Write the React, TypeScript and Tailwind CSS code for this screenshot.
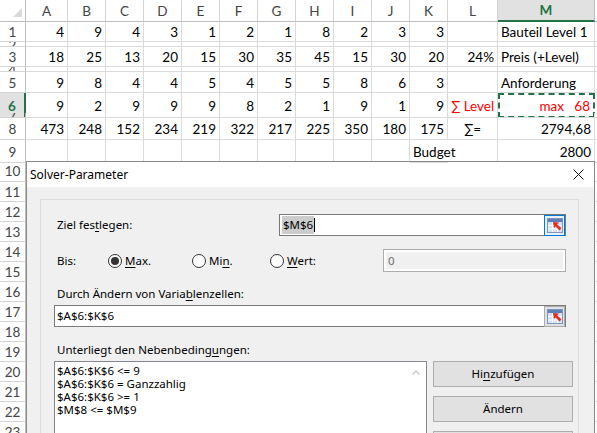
import type { ReactNode } from 'react';

const COLS = 'grid grid-cols-[26px_42px_repeat(10,38px)_50px_97px_2px]';
const LETTERS = ['A', 'B', 'C', 'D', 'E', 'F', 'G', 'H', 'I', 'J', 'K', 'L', 'M'];

type SheetRow = {
  n: number;
  h: string;
  vals?: string[];
  L?: ReactNode;
  M?: ReactNode;
  budget?: boolean;
  active?: boolean;
};

const ROWS: SheetRow[] = [
  { n: 1, h: 'h-[20px]', vals: ['4', '9', '4', '3', '1', '2', '1', '8', '2', '3', '3'], M: <span className="pl-[3px]">Bauteil Level 1</span> },
  { n: 2, h: 'h-[5px]' },
  {
    n: 3,
    h: 'h-[20px]',
    vals: ['18', '25', '13', '20', '15', '30', '35', '45', '15', '30', '20'],
    L: <span className="ml-auto pr-[3px]">24%</span>,
    M: <span className="pl-[3px]">Preis (+Level)</span>,
  },
  { n: 4, h: 'h-[5px]' },
  { n: 5, h: 'h-[21px]', vals: ['9', '8', '4', '4', '5', '4', '5', '5', '8', '6', '3'], M: <span className="pl-[3px]">Anforderung</span> },
  {
    n: 6,
    h: 'h-[20px]',
    vals: ['9', '2', '9', '9', '9', '8', '2', '1', '9', '1', '9'],
    L: <span className="pl-[3px] text-[#ff0000] whitespace-nowrap">∑ Level</span>,
    active: true,
  },
  { n: 7, h: 'h-[5px]' },
  {
    n: 8,
    h: 'h-[22px]',
    vals: ['473', '248', '152', '234', '219', '322', '217', '225', '350', '180', '175'],
    L: <span className="mx-auto">∑=</span>,
    M: <span className="ml-auto pr-[3px]">2794,68</span>,
  },
  { n: 9, h: 'h-[20px]', budget: true, M: <span className="ml-auto pr-[3px]">2800</span> },
];

function Underline({ children }: { children: ReactNode }) {
  return <span className="underline underline-offset-2">{children}</span>;
}

function ColumnHeader() {
  return (
    <div className={`${COLS} h-[22px] text-[#444]`}>
      <div className="relative border-r border-b border-[#bdbdbd]">
        <svg className="absolute right-[3px] bottom-[4px]" width="9" height="9" viewBox="0 0 9 9">
          <polygon points="9,0 9,9 0,9" fill="#dadada" />
        </svg>
      </div>
      {LETTERS.map((l) =>
        l === 'M' ? (
          <div key={l} className="flex items-center justify-center bg-[#e1e1e1] border-r border-[#bdbdbd] border-b-2 border-b-[#217346] font-bold text-[#217346]">
            {l}
          </div>
        ) : (
          <div key={l} className="flex items-center justify-center border-r border-b border-[#d4d4d4] border-b-[#bdbdbd]">
            {l}
          </div>
        ),
      )}
      <div className="border-b border-[#bdbdbd]" />
    </div>
  );
}

function Row({ row }: { row: SheetRow }) {
  const cell = 'flex items-center overflow-hidden whitespace-nowrap border-r border-b border-[#dadada] pt-[2px]';
  return (
    <div className={`${COLS} ${row.h}`}>
      {row.active ? (
        <div className="flex items-center justify-center overflow-hidden bg-[#e1e1e1] border-r-2 border-r-[#217346] border-b border-b-[#bdbdbd] font-bold text-[#217346] pt-[2px]">
          {row.n}
        </div>
      ) : (
        <div className="flex items-center justify-center overflow-hidden border-r border-b border-[#bdbdbd] border-b-[#d4d4d4] text-[#444] pt-[2px]">
          {row.n}
        </div>
      )}
      {Array.from({ length: 11 }).map((_, i) =>
        row.budget && i === 10 ? (
          <div key={i} className="relative z-10 flex items-center whitespace-nowrap border-b border-[#dadada] pt-[2px]">
            <span className="pl-[3px]">Budget</span>
          </div>
        ) : (
          <div key={i} className={`${cell} justify-end pr-[3px]`}>
            {row.vals ? row.vals[i] : ''}
          </div>
        ),
      )}
      <div className={cell}>{row.L}</div>
      {row.active ? (
        <div className="flex items-center justify-end whitespace-nowrap border-2 border-dashed border-[#217346] pr-[3px] pt-[1px] text-[#ff0000]">
          max&nbsp;&nbsp;&nbsp;68
        </div>
      ) : (
        <div className={cell}>{row.M}</div>
      )}
      <div className="border-b border-[#dadada]" />
    </div>
  );
}

function RefIcon({ focused }: { focused?: boolean }) {
  return (
    <div
      className={`flex h-[21px] w-[21px] shrink-0 items-center justify-center border ${
        focused ? 'border-[#0078d7] bg-[#e5f1fb]' : 'border-[#adadad] bg-[#e1e1e1]'
      }`}
    >
      <svg width="16" height="15" viewBox="0 0 16 15">
        <rect x="0.5" y="0.5" width="15" height="14" fill="#d6e2f3" stroke="#7d96bd" />
        <rect x="1" y="1" width="14" height="3" fill="#5c7fb5" />
        <line x1="1" y1="7.5" x2="15" y2="7.5" stroke="#ffffff" />
        <line x1="1" y1="11" x2="15" y2="11" stroke="#ffffff" />
        <line x1="5.5" y1="4" x2="5.5" y2="14" stroke="#ffffff" />
        <line x1="10.5" y1="4" x2="10.5" y2="14" stroke="#ffffff" />
        <polygon points="6,4 12,4.5 7,10" fill="#e0301e" />
        <line x1="8.5" y1="6.5" x2="13.5" y2="11.5" stroke="#e0301e" strokeWidth="2.6" />
      </svg>
    </div>
  );
}

function Radio({ checked, children, className }: { checked?: boolean; children: ReactNode; className: string }) {
  return (
    <div className={`flex items-center ${className}`}>
      <span className="flex h-[14px] w-[14px] items-center justify-center rounded-full border border-[#333] bg-white">
        {checked && <span className="h-[8px] w-[8px] rounded-full bg-[#333]" />}
      </span>
      <span className="ml-[3px]">{children}</span>
    </div>
  );
}

function Dialog() {
  return (
    <div className="w-[569px] pt-px">
      <div className="h-[300px] border border-[#8a8a8a] bg-[#f0f0f0] font-['Noto_Sans',sans-serif] text-[11.5px] text-black">
        <div className="flex h-[25px] items-center justify-between bg-white pl-[3px] pr-[10px]">
          <span className="text-[12px]">Solver-Parameter</span>
          <svg width="11" height="11" viewBox="0 0 11 11">
            <line x1="0.5" y1="0.5" x2="10.5" y2="10.5" stroke="#111" />
            <line x1="10.5" y1="0.5" x2="0.5" y2="10.5" stroke="#111" />
          </svg>
        </div>
        <div className="ml-[13px] mt-[12px] h-[300px] w-[539px] border border-[#dcdcdc]">
          <div className="mt-[14px] flex h-[22px] items-center">
            <span className="ml-[16px] w-[222px]">
              Ziel fes<Underline>t</Underline>legen:
            </span>
            <div className="flex h-[22px] w-[287px] items-center border border-[#7a7a7a] bg-white">
              <span className="ml-[2px] bg-[#cccccc] px-px">$M$6</span>
              <span className="h-[14px] w-px bg-black" />
              <span className="ml-auto">
                <RefIcon focused />
              </span>
            </div>
          </div>
          <div className="mt-[13px] flex h-[23px] items-center">
            <span className="ml-[16px] w-[51px]">Bis:</span>
            <Radio checked className="w-[84px]">
              <Underline>M</Underline>ax.
            </Radio>
            <Radio className="w-[78px]">
              Mi<Underline>n</Underline>.
            </Radio>
            <Radio className="w-[113px]">
              <Underline>W</Underline>ert:
            </Radio>
            <div className="flex h-[23px] w-[183px] items-center border border-[#adadad] bg-white p-[2px]">
              <div className="flex h-full w-full items-center bg-[#f0f0f0] pl-[2px] text-[#6d6d6d]">0</div>
            </div>
          </div>
          <div className="mt-[14px] flex h-[16px] items-center pl-[16px]">
            Durch Ändern von Varia<Underline>b</Underline>lenzellen:
          </div>
          <div className="ml-[13px] mt-[3px] flex h-[22px] w-[512px] items-center border border-[#7a7a7a] bg-white">
            <span className="ml-[2px]">$A$6:$K$6</span>
            <span className="ml-auto">
              <RefIcon />
            </span>
          </div>
          <div className="mt-[15px] flex h-[16px] items-center pl-[16px]">
            Unterliegt den Nebenbeding<Underline>u</Underline>ngen:
          </div>
          <div className="mt-[3px] flex">
            <div className="relative ml-[13px] h-[90px] w-[373px] border border-[#828790] bg-white pl-[2px] pt-[2px] leading-[13px]">
              <div>$A$6:$K$6 &lt;= 9</div>
              <div>$A$6:$K$6 = Ganzzahlig</div>
              <div>$A$6:$K$6 &gt;= 1</div>
              <div>$M$8 &lt;= $M$9</div>
              <svg className="absolute right-[6px] top-[8px]" width="8" height="5" viewBox="0 0 8 5">
                <polyline points="0.5,4.5 4,1 7.5,4.5" fill="none" stroke="#c2c2c2" strokeWidth="1.2" />
              </svg>
            </div>
            <div className="ml-[6px] flex flex-col gap-[9px]">
              <div className="flex h-[26px] w-[140px] items-center justify-center border border-[#adadad] bg-[#e1e1e1]">
                Hi<Underline>n</Underline>zufügen
              </div>
              <div className="flex h-[26px] w-[140px] items-center justify-center border border-[#adadad] bg-[#e1e1e1]">
                Ändern
              </div>
              <div className="flex h-[26px] w-[140px] items-center justify-center border border-[#adadad] bg-[#e1e1e1]" />
            </div>
          </div>
        </div>
      </div>
    </div>
  );
}

export default function App() {
  const lowerRows = [10, 11, 12, 13, 14, 15, 16, 17, 18, 19, 20, 21, 22, 23];
  return (
    <div className="h-[433px] w-[597px] overflow-hidden bg-white font-['Lato',sans-serif] text-[13.5px] text-black">
      <ColumnHeader />
      {ROWS.map((r) => (
        <Row key={r.n} row={r} />
      ))}
      <div className="flex">
        <div className="w-[26px] shrink-0">
          {lowerRows.map((n) => (
            <div
              key={n}
              className={`flex items-center justify-center border-r border-b border-[#bdbdbd] border-b-[#d4d4d4] pt-[2px] text-[#444] ${
                n === 10 ? 'h-[22px]' : 'h-[20px]'
              }`}
            >
              {n}
            </div>
          ))}
        </div>
        <Dialog />
        <div className="w-[2px]">
          {lowerRows.map((n) => (
            <div key={n} className={`border-b border-[#dadada] ${n === 10 ? 'h-[22px]' : 'h-[20px]'}`} />
          ))}
        </div>
      </div>
    </div>
  );
}
